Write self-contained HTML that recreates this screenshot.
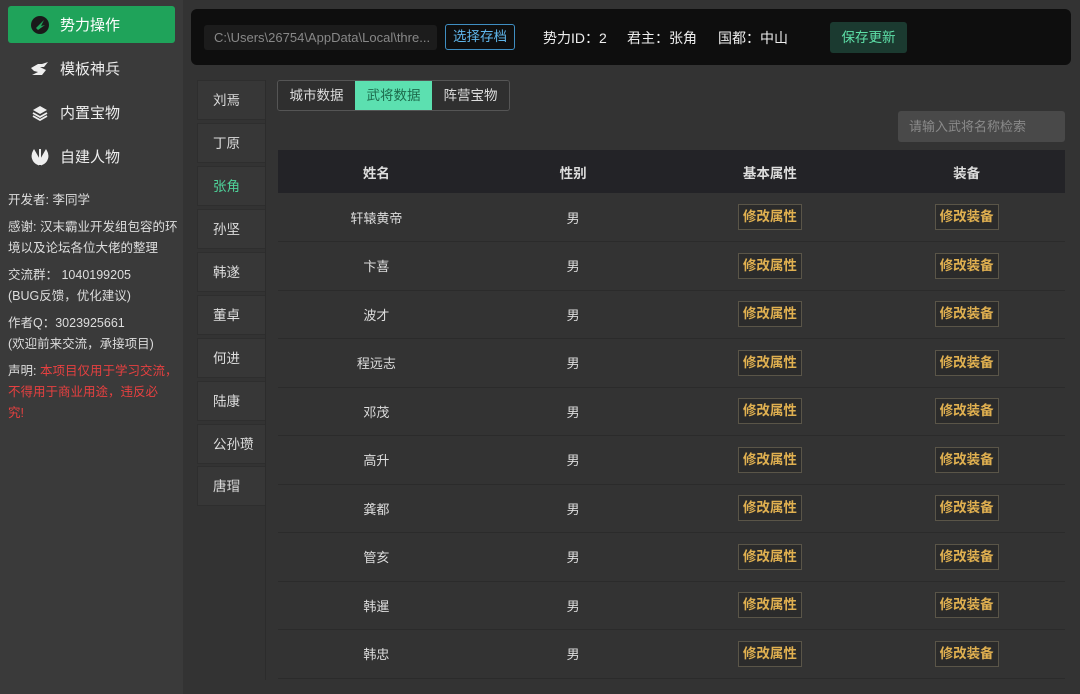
<!DOCTYPE html>
<html><head><meta charset="utf-8"><style>
*{box-sizing:border-box;margin:0;padding:0}
body{width:1080px;height:694px;background:#333333;font-family:"Liberation Sans","Noto Sans CJK SC",sans-serif;color:#ddd;position:relative;overflow:hidden;font-size:13px}
.side{position:absolute;left:0;top:0;width:183px;height:694px;background:#3a3a3a}
.nav{position:absolute;left:8px;width:167px;height:37px;border-radius:3px;display:flex;align-items:center;font-size:15px;color:#eee}
.nav .ic{width:20px;height:20px;margin-left:22px;margin-right:10px;display:flex;align-items:center;justify-content:center}
.act{background:#1fa35a;color:#fff}
.info{position:absolute;left:8px;top:190px;width:176px;font-size:12.5px;line-height:21px;color:#ddd;white-space:nowrap}
.info p{margin-bottom:6px}
.red{color:#e64040}
.hdr{position:absolute;left:191px;top:9px;width:880px;height:56px;background:#0e0e0e;border-radius:6px}
.path{position:absolute;left:13px;top:16px;width:233px;height:25px;background:#1c1c1c;border-radius:3px;color:#888;font-size:13px;line-height:25px;padding-left:10px;white-space:nowrap;overflow:hidden}
.sel{position:absolute;left:254px;top:15px;width:70px;height:26px;border:1px solid #3f8ec2;border-radius:3px;color:#5fb5ea;font-size:13.5px;text-align:center;line-height:24px}
.ht{position:absolute;top:19px;font-size:14px;color:#eee}
.save{position:absolute;left:639px;top:13px;width:77px;height:31px;background:#1b3a30;color:#5ee0a8;border-radius:3px;text-align:center;line-height:31px;font-size:13.5px}
.nm{position:absolute;left:197px;width:69px;height:40px;background:#373737;border:1px solid #2e2e2e;font-size:13.5px;padding-left:15px;line-height:40px;color:#ddd}
.vl{position:absolute;left:265px;top:80px;width:1px;height:600px;background:#2c2c2c}
.tabs{position:absolute;left:277px;top:80px;height:31px;border:1px solid #555;border-radius:3px;display:flex;overflow:hidden}
.tabs div{width:77px;text-align:center;line-height:29px;font-size:13.5px;color:#ddd;background:#2f2f2f}
.tabs .on{background:#5ce0b0;color:#1c6b4c}
.search{position:absolute;left:898px;top:111px;width:167px;height:31px;background:#494949;border-radius:3px;color:#8a8a8a;font-size:13px;line-height:31px;padding-left:11px}
table{position:absolute;left:278px;top:150px;width:787px;border-collapse:collapse}
th{background:#232327;height:43px;font-weight:bold;font-size:13.5px;color:#ddd}
td{height:48.5px;text-align:center;font-size:13px;color:#ddd;border-bottom:1px solid #2b2b2b}
td,th{width:196.75px}
.b{display:inline-block;width:64px;height:26px;border:1px solid #5a5548;color:#e0b050;background:#2b2b2b;line-height:24px;font-size:13.5px;font-weight:bold}
</style></head><body>
<div class="side">
<div class="nav act" style="top:6px"><span class="ic"><svg width="20" height="20" viewBox="0 0 20 20"><circle cx="10" cy="10" r="9" fill="#1a1a1a"/><path d="M6 13 L14 5 L11 11 L15 10 L8 15Z" fill="#1fa35a"/></svg></span>势力操作</div>
<div class="nav" style="top:50px"><span class="ic"><svg width="20" height="18" viewBox="0 0 20 18"><path d="M1 8 L8 4 L12 4 L18 2 L14 7 L10 7 L16 10 L12 15 L2 15 L8 12 L4 11Z" fill="#eee"/></svg></span>模板神兵</div>
<div class="nav" style="top:94px"><span class="ic"><svg width="16" height="16" viewBox="0 0 16 16"><path d="M8 1 L15 5 L8 9 L1 5Z" fill="#eee"/><path d="M1 8 L8 12 L15 8 M1 11 L8 15 L15 11" fill="none" stroke="#eee" stroke-width="1.8"/></svg></span>内置宝物</div>
<div class="nav" style="top:138px"><span class="ic"><svg width="18" height="18" viewBox="0 0 18 18"><path d="M9 1 L9 17 M3 3 C0 8 2 14 7 16 L7 10Z M15 3 C18 8 16 14 11 16 L11 10Z" fill="#eee" stroke="#eee" stroke-width="2"/></svg></span>自建人物</div>
<div class="info">
<p>开发者: 李同学</p>
<p>感谢: 汉末霸业开发组包容的环<br>境以及论坛各位大佬的整理</p>
<p>交流群： 1040199205<br>(BUG反馈，优化建议)</p>
<p>作者Q：3023925661<br>(欢迎前来交流，承接项目)</p>
<p>声明: <span class="red">本项目仅用于学习交流，<br>不得用于商业用途，违反必<br>究!</span></p>
</div>
</div>
<div class="hdr">
<div class="path">C:\Users\26754\AppData\Local\thre...</div>
<div class="sel">选择存档</div>
<div class="ht" style="left:352px">势力ID：2</div>
<div class="ht" style="left:436px">君主：张角</div>
<div class="ht" style="left:527px">国都：中山</div>
<div class="save">保存更新</div>
</div>
<div class="nm" style="top:80px">刘焉</div>
<div class="nm" style="top:123px">丁原</div>
<div class="nm" style="top:166px;color:#4fd39a">张角</div>
<div class="nm" style="top:209px">孙坚</div>
<div class="nm" style="top:252px">韩遂</div>
<div class="nm" style="top:295px">董卓</div>
<div class="nm" style="top:338px">何进</div>
<div class="nm" style="top:381px">陆康</div>
<div class="nm" style="top:424px">公孙瓒</div>
<div class="nm" style="top:466px">唐瑁</div>
<div class="vl"></div>
<div class="tabs"><div>城市数据</div><div class="on">武将数据</div><div>阵营宝物</div></div>
<div class="search">请输入武将名称检索</div>
<table>
<tr><th>姓名</th><th>性别</th><th>基本属性</th><th>装备</th></tr>
<tr><td>轩辕黄帝</td><td>男</td><td><span class="b">修改属性</span></td><td><span class="b">修改装备</span></td></tr>
<tr><td>卞喜</td><td>男</td><td><span class="b">修改属性</span></td><td><span class="b">修改装备</span></td></tr>
<tr><td>波才</td><td>男</td><td><span class="b">修改属性</span></td><td><span class="b">修改装备</span></td></tr>
<tr><td>程远志</td><td>男</td><td><span class="b">修改属性</span></td><td><span class="b">修改装备</span></td></tr>
<tr><td>邓茂</td><td>男</td><td><span class="b">修改属性</span></td><td><span class="b">修改装备</span></td></tr>
<tr><td>高升</td><td>男</td><td><span class="b">修改属性</span></td><td><span class="b">修改装备</span></td></tr>
<tr><td>龚都</td><td>男</td><td><span class="b">修改属性</span></td><td><span class="b">修改装备</span></td></tr>
<tr><td>管亥</td><td>男</td><td><span class="b">修改属性</span></td><td><span class="b">修改装备</span></td></tr>
<tr><td>韩暹</td><td>男</td><td><span class="b">修改属性</span></td><td><span class="b">修改装备</span></td></tr>
<tr><td>韩忠</td><td>男</td><td><span class="b">修改属性</span></td><td><span class="b">修改装备</span></td></tr>
</table>
</body></html>
